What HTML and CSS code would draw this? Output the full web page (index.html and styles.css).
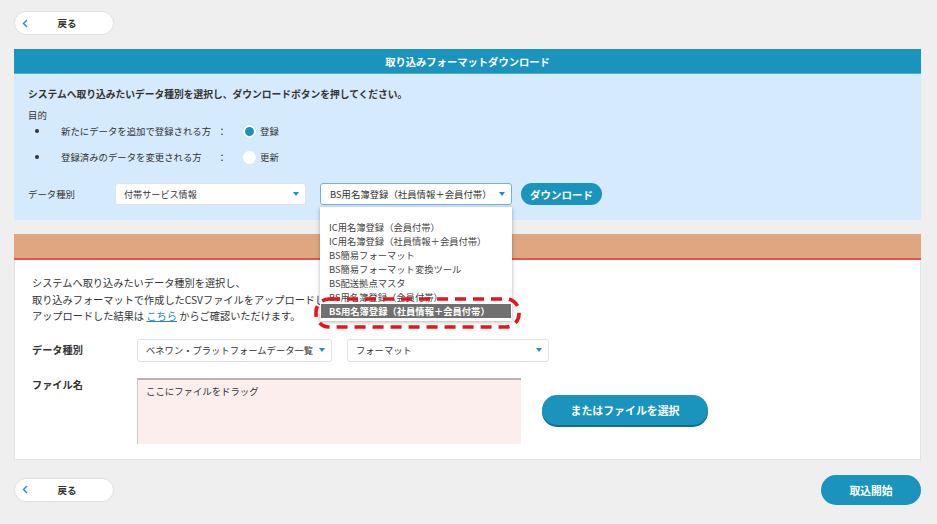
FILE: index.html
```html
<!DOCTYPE html>
<html lang="ja">
<head>
<meta charset="utf-8">
<title>取り込みフォーマットダウンロード</title>
<link rel="stylesheet" href="styles.css">
</head>
<body>
<div class="page">
  <div class="top-bar">
    <button class="back-btn" type="button">
      <svg class="chev" width="6" height="9" viewBox="0 0 6 9"><polyline points="5,1 1.5,4.5 5,8" fill="none" stroke="#1b94bd" stroke-width="1.4"/></svg>
      <span class="back-text">戻る</span>
    </button>
  </div>

  <section class="card">
    <h2 class="card-head blue">取り込みフォーマットダウンロード</h2>
    <div class="dl-body">
      <p class="lead">システムへ取り込みたいデータ種別を選択し、ダウンロードボタンを押してください。</p>
      <p class="purpose">目的</p>
      <ul class="opts">
        <li class="opt"><span class="opt-label">新たにデータを追加で登録される方</span><span class="colon">：</span><span class="radio on"></span><span class="opt-val">登録</span></li>
        <li class="opt"><span class="opt-label">登録済みのデータを変更される方</span><span class="colon">：</span><span class="radio"></span><span class="opt-val">更新</span></li>
      </ul>
      <div class="type-row">
        <span class="type-label">データ種別</span>
        <div class="select s1"><span class="sel-text">付帯サービス情報</span><i class="caret"></i></div>
        <div class="select-wrap">
          <div class="select s2 focus"><span class="sel-text">BS用名簿登録（社員情報＋会員付帯）</span><i class="caret"></i></div>
          <ul class="menu">
            <li>IC用名簿登録（会員付帯）</li>
            <li>IC用名簿登録（社員情報＋会員付帯）</li>
            <li>BS簡易フォーマット</li>
            <li>BS簡易フォーマット変換ツール</li>
            <li>BS配送拠点マスタ</li>
            <li>BS用名簿登録（会員付帯）</li>
            <li class="active">BS用名簿登録（社員情報＋会員付帯）</li>
          </ul>
          <svg class="dash" width="207" height="32" viewBox="0 0 207 32"><rect x="2" y="2" width="203" height="28" rx="13" ry="13" fill="none" stroke="#e8131b" stroke-width="3.6" stroke-dasharray="11 7"/></svg>
        </div>
        <button class="btn dl-btn" type="button">ダウンロード</button>
      </div>
    </div>
  </section>

  <section class="card up">
    <h2 class="card-head orange"></h2>
    <div class="up-body">
      <p class="desc">システムへ取り込みたいデータ種別を選択し、<br>取り込みフォーマットで作成したCSVファイルをアップロードしてください。<br>アップロードした結果は <a class="link" href="#">こちら</a> からご確認いただけます。</p>
      <div class="form-row">
        <span class="form-label">データ種別</span>
        <div class="select s3"><span class="sel-text">ベネワン・プラットフォームデータ一覧</span><i class="caret"></i></div>
        <div class="select s4"><span class="sel-text">フォーマット</span><i class="caret"></i></div>
      </div>
      <div class="form-row file-row">
        <span class="form-label">ファイル名</span>
        <div class="drop">ここにファイルをドラッグ</div>
        <button class="btn file-btn" type="button">またはファイルを選択</button>
      </div>
    </div>
  </section>

  <div class="footer-row">
    <button class="back-btn" type="button">
      <svg class="chev" width="6" height="9" viewBox="0 0 6 9"><polyline points="5,1 1.5,4.5 5,8" fill="none" stroke="#1b94bd" stroke-width="1.4"/></svg>
      <span class="back-text">戻る</span>
    </button>
    <button class="btn start-btn" type="button">取込開始</button>
  </div>
</div>
</body>
</html>
```

FILE: styles.css
```css
* { box-sizing: border-box; }
body {
  margin: 0;
  background: #efefef;
  font-family: "Noto Sans CJK JP", "Noto Sans", sans-serif;
  color: #333;
}
.page { padding: 11px 16px 0 14px; }

.top-bar { margin-bottom: 14px; }

.back-btn {
  display: flex;
  align-items: center;
  width: 100px;
  height: 24px;
  padding: 0 0 0 7px;
  background: #fff;
  border: 1px solid #e0e0e0;
  border-radius: 12px;
  font-family: inherit;
  font-size: 9.5px;
  font-weight: bold;
  color: #333;
}
.chev { display: block; flex: none; }
.back-text { flex: 1; text-align: center; padding-right: 7px; }

.card-head {
  margin: 0;
  height: 25px;
  line-height: 25px;
  text-align: center;
  color: #fff;
  font-size: 10.3px;
  font-weight: bold;
}
.card-head.blue { background: #1b94bd; border-bottom: 1px solid #4fb1d2; }
.card-head.orange { background: #dfa681; height: 26px; border-bottom: 2px solid #e2574d; }

.dl-body {
  background: #d5eafc;
  padding: 13px 14px 15px;
}
.lead {
  margin: 0;
  font-size: 9.75px;
  line-height: 14px;
  font-weight: bold;
}
.purpose {
  margin: 7px 0 0;
  font-size: 9.4px;
  line-height: 14px;
}
.opts { list-style: none; margin: 1px 0 0; padding: 0; }
.opt {
  display: flex;
  align-items: center;
  height: 16px;
  padding-left: 7px;
  font-size: 9.4px;
}
.opt + .opt { margin-top: 10px; }
.opt::before {
  content: "";
  width: 4px;
  height: 4px;
  border-radius: 50%;
  background: #333;
  margin-right: 22px;
  flex: none;
}
.opt-label { width: 156px; }
.colon { width: 10px; text-align: center; }
.radio {
  width: 13px;
  height: 13px;
  border-radius: 50%;
  background: #fff;
  margin-left: 16px;
  margin-right: 4px;
  flex: none;
}
.radio.on { border: 2px solid #fff; background: #1b94bd; box-shadow: 0 0 0 0.5px #c9dcea; }

.type-row {
  display: flex;
  align-items: center;
  margin-top: 18px;
  height: 22px;
}
.type-label { width: 87px; font-size: 9.4px; }

.select {
  display: flex;
  align-items: center;
  justify-content: space-between;
  height: 22px;
  background: #fff;
  border: 1px solid #dfe3e8;
  border-radius: 3px;
  padding: 0 6px 0 8px;
  font-size: 9.1px;
  white-space: nowrap;
  overflow: hidden;
}
.caret {
  width: 0;
  height: 0;
  border-left: 3.5px solid transparent;
  border-right: 3.5px solid transparent;
  border-top: 4px solid #1b94bd;
  flex: none;
}
.s1 { width: 191px; }
.select-wrap { position: relative; margin-left: 14px; }
.s2 { width: 192px; font-size: 9.4px; }
.select.focus { border-color: #78aee6; padding-left: 9px; }

.menu {
  position: absolute;
  z-index: 5;
  left: 0;
  top: 24px;
  width: 192px;
  margin: 0;
  padding: 13px 1px 3px;
  list-style: none;
  background: #fff;
  box-shadow: 0 1px 4px rgba(0, 0, 0, 0.3);
  font-size: 9.3px;
  color: #444;
}
.menu li { height: 14px; line-height: 14px; padding-left: 8px; white-space: nowrap; }
.menu li.active { background: #707070; color: #fff; font-weight: bold; }
.dash {
  position: absolute;
  z-index: 6;
  left: -6px;
  top: 114px;
}

.btn {
  border: none;
  background: #1b94bd;
  color: #fff;
  font-family: inherit;
  font-weight: bold;
  border-radius: 16px;
  padding: 0;
}
.dl-btn {
  width: 81px;
  height: 22px;
  margin-left: 9px;
  font-size: 10.5px;
  border-radius: 11px;
}

.card.up { margin-top: 14px; }
.up-body {
  background: #fff;
  border: 1px solid #e3e3e3;
  border-top: none;
  padding: 15px 17px 15px;
}
.desc {
  margin: 0;
  font-size: 10.2px;
  line-height: 16.5px;
}
.link { color: #1b8cc0; text-decoration: underline; }

.form-row {
  display: flex;
  align-items: center;
  margin-top: 14px;
}
.form-label {
  width: 105px;
  flex: none;
  font-size: 10.2px;
  font-weight: bold;
  line-height: 14px;
}
.s3 { width: 195px; height: 23px; padding-left: 8px; font-size: 9.3px; }
.s4 { width: 202px; height: 23px; margin-left: 15px; font-size: 9.3px; }

.file-row { margin-top: 16px; align-items: flex-start; }
.drop {
  width: 384px;
  height: 66px;
  background: #fdeeee;
  border-top: 2px solid #b5b5b5;
  border-left: 1px solid #c8c8c8;
  padding: 4px 8px;
  font-size: 9.4px;
  line-height: 14px;
}
.file-btn {
  width: 166px;
  height: 30px;
  margin-left: 21px;
  margin-top: 17px;
  font-size: 10.9px;
  box-shadow: 0 2px 0 #136f8f;
}

.footer-row {
  display: flex;
  justify-content: space-between;
  align-items: center;
  margin-top: 15px;
  height: 30px;
}
.start-btn {
  width: 100px;
  height: 30px;
  font-size: 10.8px;
  border-radius: 15px;
}
```
